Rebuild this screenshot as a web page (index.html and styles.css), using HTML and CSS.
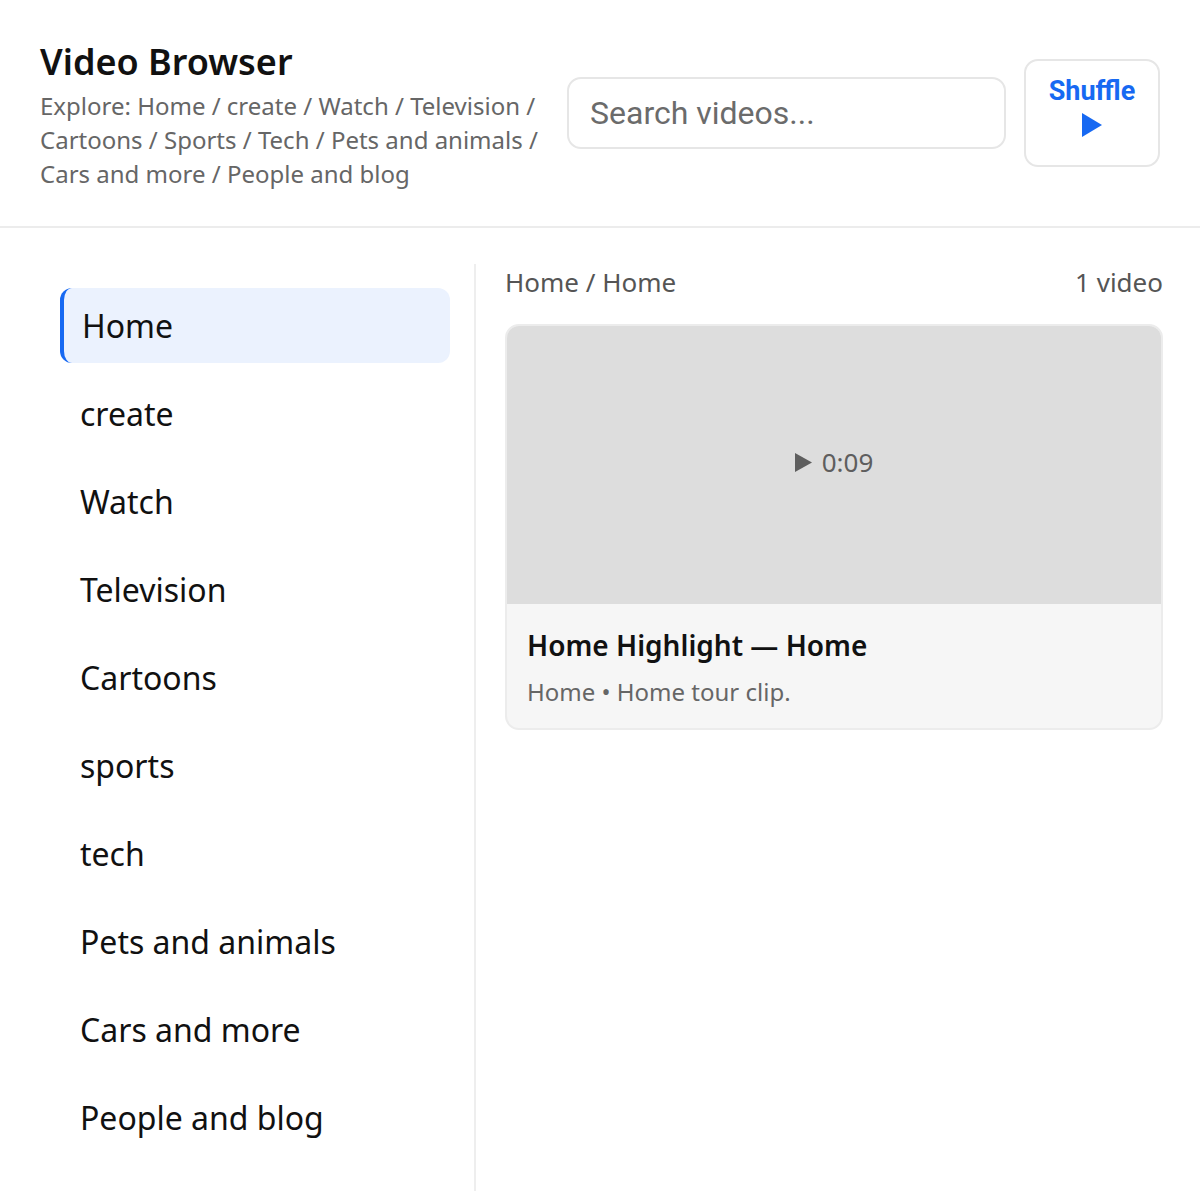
FILE: index.html
```html
<!DOCTYPE html>
<html lang="en">
<head>
<meta charset="utf-8">
<title>Video Browser</title>
<link rel="stylesheet" href="styles.css">
</head>
<body>
<header class="topbar">
  <div class="brand">
    <h1 class="title">Video Browser</h1>
    <p class="explore">Explore: Home / create / Watch / Television / Cartoons / Sports / Tech / Pets and animals / Cars and more / People and blog</p>
  </div>
  <input class="search" type="text" placeholder="Search videos...">
  <button class="shuffle" type="button">
    <span class="shuffle-label">Shuffle</span>
    <svg class="shuffle-icon" width="20" height="24" viewBox="0 0 20 24" aria-hidden="true"><polygon points="0,0 20,12 0,24" fill="currentColor"/></svg>
  </button>
</header>
<main class="layout">
  <nav class="sidebar">
    <a class="nav-item active">Home</a>
    <a class="nav-item">create</a>
    <a class="nav-item">Watch</a>
    <a class="nav-item">Television</a>
    <a class="nav-item">Cartoons</a>
    <a class="nav-item">sports</a>
    <a class="nav-item">tech</a>
    <a class="nav-item">Pets and animals</a>
    <a class="nav-item">Cars and more</a>
    <a class="nav-item">People and blog</a>
  </nav>
  <section class="content">
    <div class="content-head">
      <span class="crumb">Home / Home</span>
      <span class="count">1 video</span>
    </div>
    <article class="card">
      <div class="thumb">
        <svg class="thumb-play" width="17" height="19" viewBox="0 0 17 19" aria-hidden="true"><polygon points="0,0 17,9.5 0,19" fill="currentColor"/></svg>
        <span class="duration">0:09</span>
      </div>
      <div class="card-body">
        <h2 class="card-title">Home Highlight — Home</h2>
        <p class="card-meta">Home • Home tour clip.</p>
      </div>
    </article>
  </section>
</main>
</body>
</html>
```

FILE: styles.css
```css
* { box-sizing: border-box; }
html, body { margin: 0; padding: 0; background: #fff; }
body {
  font-family: "Noto Sans", "Open Sans", sans-serif;
  color: #111;
}
.topbar {
  display: flex;
  align-items: center;
  padding: 40px 40px 35px;
  border-bottom: 2px solid #ececec;
}
.brand {
  flex: 0 0 505px;
  margin-right: 22px;
}
.title {
  margin: 0 0 5px;
  font-size: 36px;
  line-height: 44px;
  font-weight: 600;
  color: #111;
}
.explore {
  margin: 0;
  font-size: 24px;
  line-height: 34px;
  color: #666;
}
.search {
  flex: 1 1 auto;
  min-width: 0;
  height: 72px;
  margin-bottom: 5px;
  border: 2px solid #e6e6e6;
  border-radius: 14px;
  padding: 0 21px;
  font-family: Roboto, "Noto Sans", sans-serif;
  font-size: 32px;
  color: #333;
  background: #fff;
  outline: none;
}
.search::placeholder { color: #6b6b6b; }
.shuffle {
  flex: 0 0 136px;
  margin-left: 18px;
  margin-bottom: 5px;
  height: 108px;
  border: 2px solid #e6e6e6;
  border-radius: 14px;
  background: #fff;
  color: #1769f2;
  display: flex;
  flex-direction: column;
  align-items: center;
  justify-content: flex-start;
  gap: 6px;
  padding: 14px 0 0;
  font-family: Roboto, "Noto Sans", sans-serif;
}
.shuffle-label {
  font-size: 27px;
  line-height: 32px;
  font-weight: 700;
}
.shuffle-icon { display: block; }
.layout {
  display: flex;
  padding: 36px 0 8px;
}
.sidebar {
  flex: 0 0 476px;
  border-right: 2px solid #eeeeee;
  padding: 24px 24px 36px 60px;
  display: flex;
  flex-direction: column;
  gap: 13px;
}
.nav-item {
  display: flex;
  align-items: center;
  height: 75px;
  padding-left: 20px;
  border-radius: 12px;
  font-size: 32px;
  color: #111;
}
.nav-item.active {
  background: #ebf2fe;
  border-left: 4px solid #1769f2;
  padding-left: 18px;
}
.content {
  flex: 1 1 auto;
  padding: 0 37px 0 29px;
}
.content-head {
  display: flex;
  justify-content: space-between;
  font-size: 26px;
  line-height: 36px;
  color: #555;
  margin-bottom: 24px;
}
.card {
  border: 2px solid #ececec;
  border-radius: 14px;
  overflow: hidden;
  background: #f6f6f6;
}
.thumb {
  height: 278px;
  padding-bottom: 6px;
  background: #dddddd;
  display: flex;
  align-items: center;
  justify-content: center;
  gap: 10px;
  color: #5e5e5e;
}
.thumb-play { display: block; }
.duration {
  font-size: 26px;
  line-height: 32px;
  color: #5e5e5e;
}
.card-body {
  padding: 23px 20px 20px;
}
.card-title {
  margin: 0 0 13px;
  font-size: 28px;
  line-height: 36px;
  font-weight: 600;
  color: #111;
}
.card-meta {
  margin: 0;
  font-size: 24px;
  line-height: 32px;
  color: #666;
}
```
